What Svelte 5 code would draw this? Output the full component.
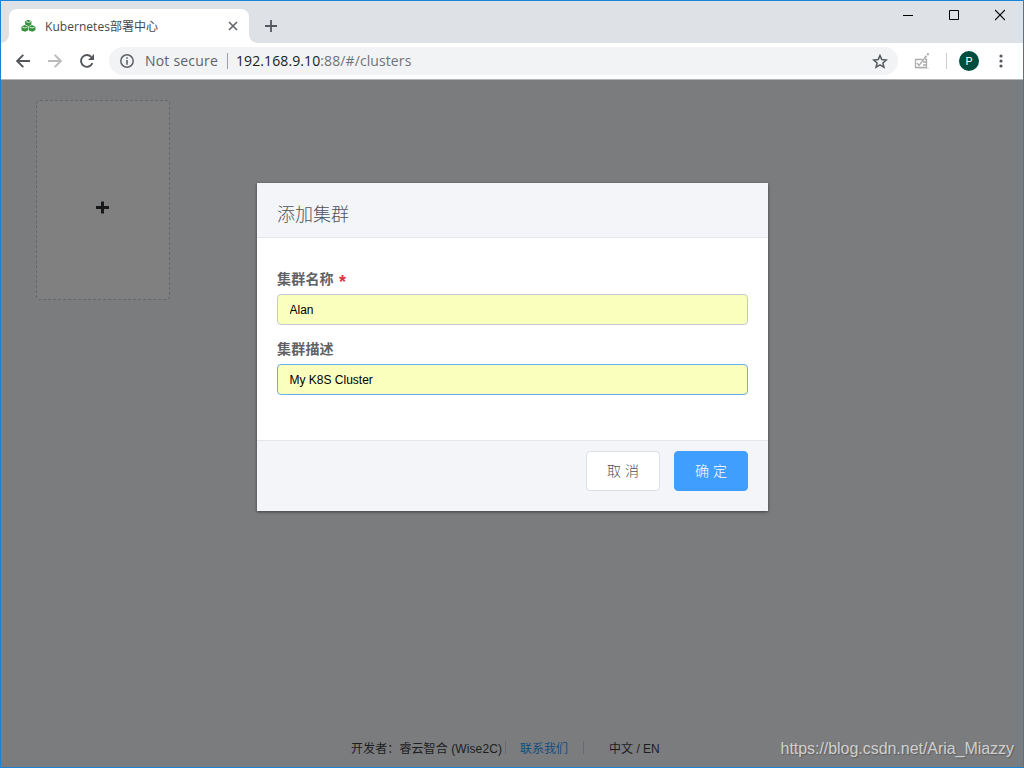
<script lang="ts">
  let name = $state("Alan");
  let description = $state("My K8S Cluster");
</script>

<div class="window">
  <header class="tabstrip">
    <div class="tab">
      <svg class="favicon" width="15" height="14" viewBox="0 0 15 14">
        <g fill="#38913f">
          <path d="M7 0.8 10.4 2V5.6L7.6 7.2 4.1 5.6V2.2Z" />
          <path d="M3.6 6 7.2 7.5V11.2L4.2 12.8 .5 11.4V7.5Z" />
          <path d="M10.8 6 14.4 7.5V11.2L11.3 12.8 7.8 11.4V7.5Z" />
        </g>
        <path d="M5 2.6 7.5 3.5 10 2.6M1.3 8 3.9 9 6.4 8M8.6 8 11.1 9 13.7 8" fill="none" stroke="#d5ecd8" />
      </svg>
      <span class="tab-title">Kubernetes部署中心</span>
      <svg class="tab-close" width="10" height="10" viewBox="0 0 10 10">
        <path d="M1 1 9 9M9 1 1 9" stroke="#5f6368" stroke-width="1.6" />
      </svg>
    </div>
    <svg class="new-tab" width="12" height="12" viewBox="0 0 12 12">
      <path d="M6 0V12M0 6H12" stroke="#54585d" stroke-width="1.8" />
    </svg>
    <div class="controls">
      <svg width="10" height="12" viewBox="0 0 10 12"><path d="M0 6.5H10" stroke="#000" /></svg>
      <svg width="10" height="12" viewBox="0 0 10 12"><path d="M.5 1.5H9.5V10.5H.5Z" fill="none" stroke="#000" /></svg>
      <svg width="10" height="12" viewBox="0 0 10 12"><path d="M0 1 10 11M10 1 0 11" stroke="#000" stroke-width="1.1" /></svg>
    </div>
  </header>

  <nav class="toolbar">
    <svg class="back" width="14" height="14" viewBox="0 0 14 14">
      <path d="M14 7H1.5M7.3 .8 1.2 7 7.3 13.2" fill="none" stroke="#54585d" stroke-width="1.9" />
    </svg>
    <svg class="forward" width="14" height="14" viewBox="0 0 14 14">
      <path d="M0 7H12.5M6.7 .8 12.8 7 6.7 13.2" fill="none" stroke="#bbb" stroke-width="1.9" />
    </svg>
    <svg class="reload" width="14" height="14" viewBox="0 0 14 14">
      <path d="M12.4 9.2A5.9 5.9 0 1 1 11.2 2.8" fill="none" stroke="#54585d" stroke-width="1.9" />
      <path d="M14 0V6H8Z" fill="#54585d" />
    </svg>
    <div class="omnibox">
      <svg width="14" height="14" viewBox="0 0 14 14">
        <circle cx="7" cy="7" r="6.2" fill="none" stroke="#5f6368" stroke-width="1.5" />
        <path d="M6.2 3.2H7.8V4.8H6.2ZM6.2 6H7.8V10.8H6.2Z" fill="#5f6368" />
      </svg>
      <span class="security">Not secure</span>
      <span class="url"><b>192.168.9.10</b>:88/#/clusters</span>
      <svg class="star" width="16" height="15" viewBox="0 0 16 15">
        <path d="M8 1.5 9.8 5.6 14.2 6 10.9 8.9 11.9 13.3 8 10.9 4.1 13.3 5.1 8.9 1.8 6 6.2 5.6Z" fill="none" stroke="#54585d" stroke-width="1.5" />
      </svg>
    </div>
    <svg class="extension" width="16" height="18" viewBox="0 0 16 18">
      <path d="M8.5 7.5H1.5V15.5H12.5V7.5H11M3 11 5 13.5 12 4.5M9 10H12M9 13H12" fill="none" stroke="#acacac" stroke-width="1.3" />
      <path d="M11 5.5 12.5 4M13.2 3 14.6 1.4" stroke="#b1b1b1" stroke-width="2" />
      <path d="M1 16.5H15" stroke="#dedede" />
    </svg>
    <span class="avatar">P</span>
    <svg class="menu" width="4" height="14" viewBox="0 0 4 14">
      <circle cx="2" cy="2" r="1.6" /><circle cx="2" cy="7" r="1.6" /><circle cx="2" cy="12" r="1.6" />
    </svg>
  </nav>

  <main class="page">
    <button class="add-card" aria-label="添加集群">
      <svg width="13" height="13" viewBox="0 0 13 13">
        <path d="M6.5 .5V12.5M0 6.5H13" stroke="#171819" stroke-width="3" />
      </svg>
    </button>

    <footer class="footer">
      <span class="developer">开发者：睿云智合 (Wise2C)</span>
      <i class="bar first"></i>
      <span class="contact">联系我们</span>
      <i class="bar second"></i>
      <span>中文 / EN</span>
    </footer>

    <span class="watermark">https://blog.csdn.net/Aria_Miazzy</span>

    <section class="dialog">
      <h2>添加集群</h2>
      <div class="body">
        <label for="cluster-name">集群名称 <em>*</em></label>
        <input id="cluster-name" bind:value={name} />
        <label for="cluster-desc">集群描述</label>
        <input id="cluster-desc" class="focused" bind:value={description} />
      </div>
      <div class="actions">
        <button class="cancel">取 消</button>
        <button class="confirm">确 定</button>
      </div>
    </section>
  </main>
</div>

<style>
  :global(body) {
    overflow: hidden;
  }

  .window {
    box-sizing: border-box;
    width: 1024px;
    height: 768px;
    display: flex;
    flex-direction: column;
    border: 1px solid #1883d7;
    background: #7b7c7e;
    font-family: "Liberation Sans", "Noto Sans CJK SC", sans-serif;
  }

  svg {
    display: block;
    flex: none;
  }

  .tabstrip {
    height: 42px;
    flex: none;
    display: flex;
    background: #dee1e6;
  }

  .tab {
    position: relative;
    box-sizing: border-box;
    width: 240px;
    height: 34px;
    margin: 8px 0 0 8px;
    padding: 0 11px 0 12px;
    display: flex;
    align-items: center;
    border-radius: 8px 8px 0 0;
    background: #fff;
  }

  .tab::before,
  .tab::after {
    content: "";
    position: absolute;
    bottom: 0;
    width: 8px;
    height: 8px;
  }

  .tab::before {
    left: -8px;
    background: radial-gradient(circle at 0 0, #dee1e6 7.5px, #fff 8px);
  }

  .tab::after {
    right: -8px;
    background: radial-gradient(circle at 100% 0, #dee1e6 7.5px, #fff 8px);
  }

  .tab-title {
    margin-left: 9px;
    font: 12px "Open Sans", "Noto Sans CJK SC", sans-serif;
    letter-spacing: 0.04px;
    color: #45494d;
    white-space: nowrap;
  }

  .tab-close {
    margin-left: auto;
  }

  .new-tab {
    margin: 19px 0 0 16px;
  }

  .controls {
    display: flex;
    gap: 36px;
    margin: 8px 18px 0 auto;
  }

  .toolbar {
    height: 36px;
    flex: none;
    display: flex;
    align-items: center;
    padding-left: 15px;
    background: #fff;
    border-bottom: 1px solid #b4b5b6;
  }

  .forward,
  .reload {
    margin-left: 18px;
  }

  .omnibox {
    box-sizing: border-box;
    width: 789px;
    height: 28px;
    margin-left: 15px;
    padding: 0 10px 0 11px;
    display: flex;
    align-items: center;
    border-radius: 14px;
    background: #f1f3f4;
    font: 14px/20px "Open Sans", sans-serif;
    letter-spacing: 0.1px;
    color: #5f6368;
    white-space: nowrap;
  }

  .security {
    width: 83px;
    height: 16px;
    line-height: 15px;
    margin-left: 11px;
    border-right: 1px solid #9aa0a6;
    box-sizing: border-box;
    letter-spacing: 0.2px;
  }

  .url {
    margin-left: 8px;
    color: #707478;
  }

  .url b {
    font-weight: 400;
    color: #202124;
  }

  .star {
    margin-left: auto;
  }

  .extension {
    margin-left: 16px;
  }

  .avatar {
    position: relative;
    width: 20px;
    height: 20px;
    margin-left: 29px;
    border-radius: 50%;
    background: #004d40;
    font: 11px/21px Roboto, sans-serif;
    text-align: center;
    color: #fff;
  }

  .avatar::before {
    content: "";
    position: absolute;
    left: -13px;
    top: 2px;
    width: 1px;
    height: 16px;
    background: #c9cccf;
  }

  .menu {
    margin-left: 20px;
    fill: #54585d;
  }

  .page {
    position: relative;
    flex: 1;
    min-height: 0;
    display: flex;
    flex-direction: column;
    justify-content: space-between;
  }

  .add-card {
    box-sizing: border-box;
    width: 134px;
    height: 200px;
    margin: 20px 0 0 35px;
    padding: 15px 1px 0 0;
    display: flex;
    justify-content: center;
    align-items: center;
    border: 1px dashed #63676f;
    border-radius: 4px;
    background: #808080;
  }

  .footer {
    display: flex;
    align-items: center;
    height: 18px;
    margin: 0 0 11px 350px;
    font-size: 12px;
    color: #1b1c1e;
    white-space: nowrap;
  }

  .developer {
    letter-spacing: 0.1px;
  }

  .bar {
    width: 1px;
    height: 13px;
    background: #686b72;
  }

  .first {
    margin: 0 14px 0 3px;
  }

  .contact {
    color: #124d80;
  }

  .second {
    margin: 0 25px 0 15px;
  }

  .watermark {
    position: absolute;
    right: 9px;
    bottom: 8px;
    font-size: 16px;
    line-height: 20px;
    letter-spacing: -0.04px;
    color: #d0d0d0;
    text-shadow: 1px 1px 1px #5c5c5c;
  }

  .dialog {
    position: absolute;
    left: 256px;
    top: 103px;
    width: 511px;
    height: 328px;
    display: flex;
    flex-direction: column;
    background: #fff;
    box-shadow: 0 1px 3px rgba(0, 0, 0, 0.5);
  }

  h2 {
    box-sizing: border-box;
    height: 55px;
    margin: 0;
    padding: 9px 20px 0;
    border-bottom: 1px solid #e3e6ea;
    background: #f3f5f9;
    font-size: 18px;
    font-weight: 300;
    line-height: 46px;
    color: #505256;
  }

  .body {
    flex: 1;
    padding: 31px 20px 0;
    display: flex;
    flex-direction: column;
  }

  label {
    height: 20px;
    margin-bottom: 5px;
    font-size: 14px;
    font-weight: 700;
    line-height: 20px;
    letter-spacing: 0.2px;
    color: #606266;
  }

  label em {
    margin-left: 1px;
    font-style: normal;
    font-size: 18px;
    line-height: 10px;
    vertical-align: -4px;
    color: #dc3545;
  }

  input {
    box-sizing: border-box;
    width: 100%;
    height: 31px;
    margin: 0 0 14px;
    padding: 0 12px 0 11.5px;
    border: 1px solid #c5c8ce;
    border-radius: 4px;
    outline: none;
    background: #faffbd;
    font: 12px "Liberation Sans", sans-serif;
    color: #000;
  }

  .focused {
    border-color: #66afe9;
  }

  .actions {
    box-sizing: border-box;
    height: 71px;
    padding: 10px 20px;
    display: flex;
    justify-content: flex-end;
    gap: 14px;
    border-top: 1px solid #e3e6ea;
    background: #f3f5f9;
  }

  .actions button {
    box-sizing: border-box;
    width: 74px;
    height: 40px;
    padding: 0 0 2px;
    border: 1px solid #dcdfe6;
    border-radius: 4px;
    background: #fff;
    font: 300 14px "Liberation Sans", "Noto Sans CJK SC", sans-serif;
    color: #505256;
  }

  .actions .confirm {
    border-color: #409eff;
    background: #409eff;
    color: #fff;
  }
</style>
